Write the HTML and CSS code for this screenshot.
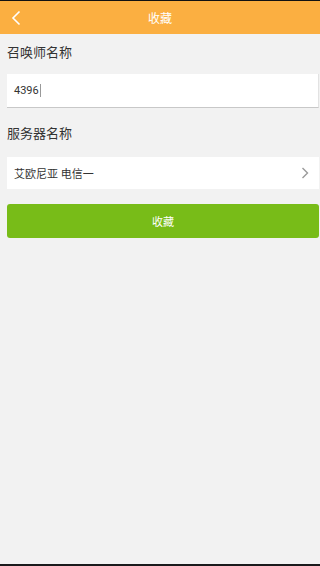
FILE: index.html
```html
<!DOCTYPE html>
<html>
<head>
  <meta charset="utf-8">
  <link rel="stylesheet" href="styles.css">
</head>
<body>
  <div class="statusbar"></div>
  <div class="header">
    <span class="back">
      <svg width="10" height="16" viewBox="0 0 10 16"><path d="M8.5 1.5 L2 8 L8.5 14.5" fill="none" stroke="#fff" stroke-width="1.6"/></svg>
    </span>
    <h1>收藏</h1>
  </div>

  <div class="container">
    <div class="field-label first">召唤师名称</div>
    <div class="input-box">
      <span class="input-text">4396</span><span class="caret"></span>
    </div>

    <div class="field-label">服务器名称</div>
    <div class="select-row">
      <span class="select-text">艾欧尼亚 电信一</span>
      <svg class="arrow" width="8" height="12" viewBox="0 0 8 12"><path d="M1.5 1 L6.5 6 L1.5 11" fill="none" stroke="#9a9a9a" stroke-width="1.4"/></svg>
    </div>

    <button class="btn">收藏</button>
  </div>
  <div class="navbar"></div>
</body>
</html>
```

FILE: styles.css
```css
html, body {
  height: 100%;
}

body {
  margin: 0;
  padding: 0;
  width: 320px;
  height: 566px;
  font-family: Roboto, "Noto Sans CJK SC", sans-serif;
  background-color: #f2f2f2;
  color: #333;
  display: flex;
  flex-direction: column;
}

.statusbar {
  height: 1px;
  background: #111;
}

.header {
  position: relative;
  height: 33px;
  background: #fbaf41;
  display: flex;
  align-items: center;
  justify-content: center;
}

.header h1 {
  margin: 0;
  font-size: 12px;
  font-weight: 400;
  color: #fff;
}

.back {
  position: absolute;
  left: 11px;
  top: 9px;
  display: flex;
}

.container {
  flex: 1;
  padding: 0 1px 0 7px;
}

.field-label {
  font-size: 13px;
  line-height: 18px;
  padding-top: 10px;
  margin-bottom: 14px;
  color: #333;
}

.field-label.first {
  margin-bottom: 12px;
}

.input-box {
  height: 33px;
  background: #fff;
  border-right: 1px solid #e2e2e2;
  border-bottom: 1px solid #c8c8c8;
  display: flex;
  align-items: center;
  padding-left: 7px;
  margin-bottom: 7px;
}

.input-text {
  font-size: 11px;
  color: #333;
}

.caret {
  width: 1px;
  height: 13px;
  background: #999;
  margin-left: 1px;
}

.select-row {
  height: 32px;
  background: #fff;
  display: flex;
  align-items: center;
  justify-content: space-between;
  padding: 0 10px 0 7px;
  margin-bottom: 15px;
}

.select-text {
  font-size: 11px;
  color: #333;
}

.btn {
  display: block;
  width: 100%;
  height: 34px;
  background: #78bc18;
  color: #fff;
  border: none;
  border-radius: 3px;
  font-family: Roboto, "Noto Sans CJK SC", sans-serif;
  font-size: 11px;
  padding: 0;
}

.navbar {
  height: 2px;
  background: #1a1a1c;
}
```
